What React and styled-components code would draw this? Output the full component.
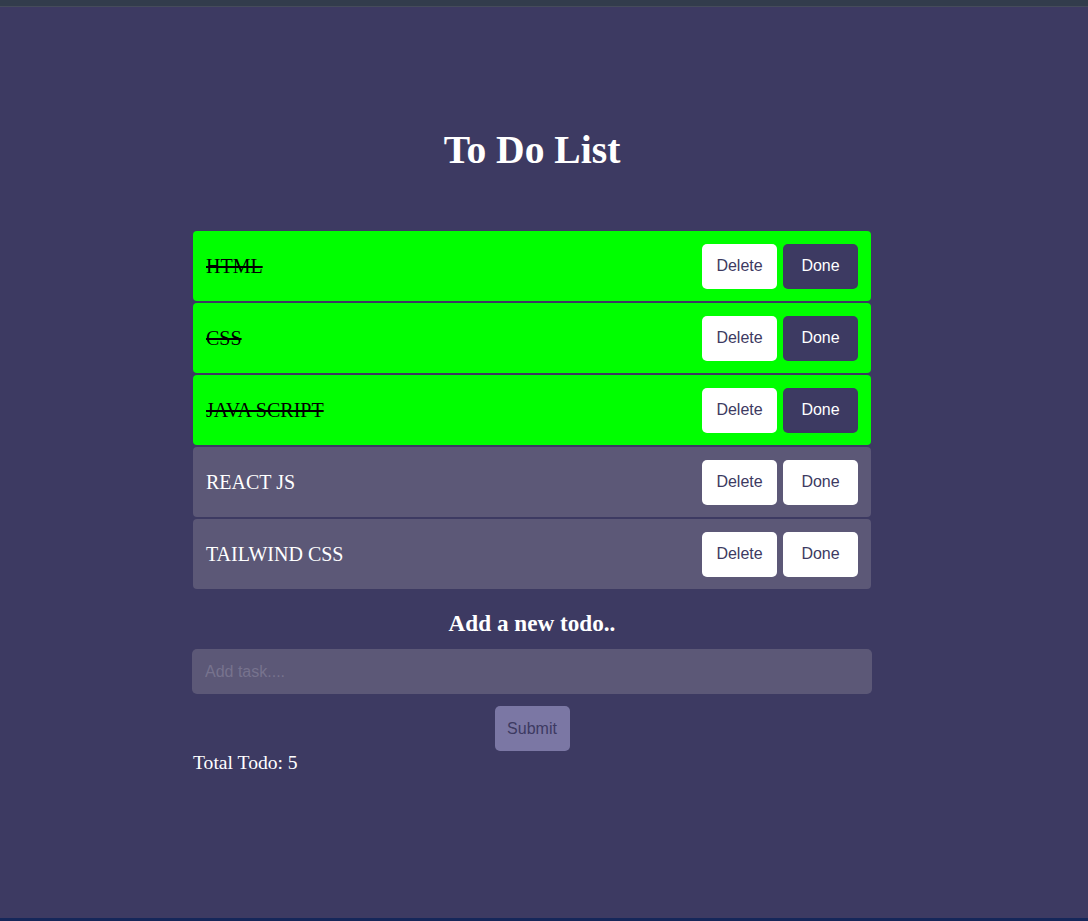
import React from "react";
import styled, { createGlobalStyle } from "styled-components";

const BG = "#3d3a62";
const ROW = "#5c5877";

const GlobalStyle = createGlobalStyle`
  html, body { margin: 0; padding: 0; background: ${BG}; }
  body { font-family: "Liberation Serif", "Times New Roman", serif; }
  * { box-sizing: border-box; }
`;

const Page = styled.div`
  min-height: 100vh;
  display: flex;
  flex-direction: column;
  background: ${BG};
`;

const TopStrip = styled.div`
  height: 7px;
  background: #323c4c;
  border-bottom: 1px solid #454b5b;
`;

const BottomStrip = styled.div`
  height: 3px;
  background: #16275a;
`;

const Main = styled.main`
  flex: 1;
  display: flex;
  flex-direction: column;
  align-items: center;
  padding: 120px 24px 0 0;
`;

const Container = styled.div`
  width: 678px;
  display: flex;
  flex-direction: column;
`;

const Title = styled.h1`
  margin: 0 0 58px;
  text-align: center;
  color: #fff;
  font-size: 39.6px;
  line-height: 46px;
  font-weight: bold;
`;

const List = styled.div`
  display: flex;
  flex-direction: column;
  gap: 2px;
`;

const Row = styled.div`
  height: 70px;
  display: flex;
  align-items: center;
  justify-content: space-between;
  padding: 0 13px;
  border-radius: 4px;
  background: ${(p) => (p.$done ? "#00ff00" : ROW)};
`;

const ItemText = styled.span`
  font-size: 20px;
  color: ${(p) => (p.$done ? "#000" : "#fff")};
  text-decoration: ${(p) => (p.$done ? "line-through" : "none")};
`;

const Actions = styled.div`
  display: flex;
  gap: 6px;
`;

const Button = styled.button`
  width: 75px;
  height: 45px;
  border: none;
  border-radius: 5px;
  font-family: "Liberation Sans", Arial, sans-serif;
  font-size: 16px;
  cursor: pointer;
  background: ${(p) => (p.$dark ? BG : "#fff")};
  color: ${(p) => (p.$dark ? "#fff" : BG)};
`;

const SubTitle = styled.h3`
  margin: 20px 0 12px;
  text-align: center;
  color: #fff;
  font-size: 23.2px;
  line-height: 28px;
  font-weight: bold;
`;

const Input = styled.input`
  width: 680px;
  margin-left: -1px;
  height: 45px;
  border: none;
  outline: none;
  border-radius: 5px;
  background: ${ROW};
  padding: 0 13px;
  font-family: "Liberation Sans", Arial, sans-serif;
  font-size: 16px;
  color: #fff;
  &::placeholder { color: #77738e; }
`;

const SubmitRow = styled.div`
  display: flex;
  justify-content: center;
  margin-top: 12px;
`;

const Submit = styled.button`
  width: 75px;
  height: 45px;
  border: none;
  border-radius: 5px;
  background: #7b77a4;
  color: ${BG};
  font-family: "Liberation Sans", Arial, sans-serif;
  font-size: 16px;
`;

const Total = styled.p`
  margin: 1px 0 0;
  color: #fff;
  font-size: 19.6px;
  line-height: 22px;
`;

const todos = [
  { text: "HTML", done: true },
  { text: "CSS", done: true },
  { text: "JAVA SCRIPT", done: true },
  { text: "REACT JS", done: false },
  { text: "TAILWIND CSS", done: false },
];

export default function App() {
  return (
    <Page>
      <GlobalStyle />
      <TopStrip />
      <Main>
        <Container>
          <Title>To Do List</Title>
          <List>
            {todos.map((t) => (
              <Row key={t.text} $done={t.done}>
                <ItemText $done={t.done}>{t.text}</ItemText>
                <Actions>
                  <Button>Delete</Button>
                  <Button $dark={t.done}>Done</Button>
                </Actions>
              </Row>
            ))}
          </List>
          <SubTitle>Add a new todo..</SubTitle>
          <Input placeholder="Add task...." />
          <SubmitRow>
            <Submit>Submit</Submit>
          </SubmitRow>
          <Total>Total Todo: {todos.length}</Total>
        </Container>
      </Main>
      <BottomStrip />
    </Page>
  );
}
